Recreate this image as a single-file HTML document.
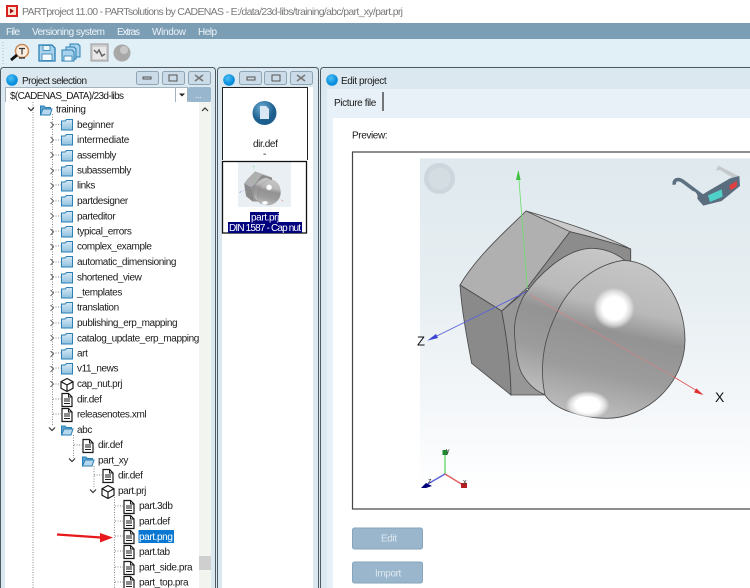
<!DOCTYPE html>
<html><head><meta charset="utf-8"><style>
html,body{margin:0;padding:0;background:#fff;width:750px;height:588px;overflow:hidden}
svg{display:block}
text{font-family:"Liberation Sans",sans-serif;font-size:10px;fill:#1a1a1a;letter-spacing:-.4px}
</style></head><body>
<svg xmlns="http://www.w3.org/2000/svg" width="750" height="588" viewBox="0 0 750 588">
<defs>
<linearGradient id="bg" x1="0" y1="0" x2="0" y2="1"><stop offset="0" stop-color="#dfe9ee"/><stop offset=".4" stop-color="#e7eef2"/><stop offset=".75" stop-color="#f4f7f9"/><stop offset="1" stop-color="#fff"/></linearGradient>
<linearGradient id="dome" x1=".6" y1="0" x2=".4" y2="1"><stop offset="0" stop-color="#c6c6c6"/><stop offset=".3" stop-color="#b9b9b9"/><stop offset=".46" stop-color="#939393"/><stop offset=".72" stop-color="#9c9c9c"/><stop offset="1" stop-color="#bdbdbd"/></linearGradient>
<radialGradient id="hl"><stop offset=".55" stop-color="#fff"/><stop offset=".8" stop-color="#fff" stop-opacity=".55"/><stop offset="1" stop-color="#fff" stop-opacity="0"/></radialGradient>
<linearGradient id="folder" x1="0" y1="0" x2="0" y2="1"><stop offset="0" stop-color="#d6e9f5"/><stop offset="1" stop-color="#8fc0df"/></linearGradient>
<radialGradient id="blue" cx=".4" cy=".35"><stop offset="0" stop-color="#4fc0f5"/><stop offset="1" stop-color="#0a8fdc"/></radialGradient>
<radialGradient id="ball" cx=".4" cy=".3"><stop offset="0" stop-color="#6fb0d8"/><stop offset="1" stop-color="#1c5f8e"/></radialGradient>
<symbol id="f" overflow="visible"><path d="M-5.500-4h3.500l1.500-1.500h6v10.500h-11z" fill="url(#folder)" stroke="#2a7fb5" stroke-width="1"/></symbol>
<symbol id="fo" overflow="visible"><path d="M-5.500 5v-9h3.500l1.500 1.500h5v1.500" fill="#5fa5d0" stroke="#2a7fb5"/><path d="M-5.500 5l2.500-6h9l-2 6z" fill="#b7d8ec" stroke="#2a7fb5"/></symbol>
<symbol id="d" overflow="visible"><path d="M-5-6.500h6.500l3.500 3.500v9.500h-10z" fill="#fff" stroke="#1a1a1a" stroke-width="1.200"/><path d="M1.500-6.500v3.500h3.500M-3-1h6M-3 1h6M-3 3.500h6" fill="none" stroke="#1a1a1a"/></symbol>
<symbol id="c" overflow="visible"><path d="M0-6.500l6 3.200v6.600l-6 3.200l-6-3.200v-6.600zM-6-3.300L0 0l6-3.300M0 0v6.500" fill="#fff" stroke="#1a1a1a" stroke-width="1.200"/></symbol>
<symbol id="r" overflow="visible"><path d="M-1.500-3L1.500 0L-1.500 3" fill="none" stroke="#666" stroke-width="1"/></symbol>
<symbol id="v" overflow="visible"><path d="M-3-1.500L0 1.500L3-1.500" fill="none" stroke="#333" stroke-width="1.200"/></symbol>
<symbol id="b" overflow="visible"><rect x=".5" y=".5" width="22" height="13" rx="2" fill="#cbdbe7" stroke="#8ea5b5"/></symbol>
<g id="nut">
<path d="M318 183C430 215 540 250 632 297V335L450 290Z" fill="#cacaca" stroke="#4a4a4a" stroke-width="2.500"/>
<path d="M450 245C520 262 580 278 632 297V340L400 430L320 415Z" fill="#8c8c8c" stroke="#4a4a4a" stroke-width="2.500"/>
<path d="M120 405C170 320 250 250 318 183L450 245L320 415L245 483Z" fill="#b0b0b0" stroke="#4a4a4a" stroke-width="2.500"/>
<path d="M120 405L245 483C262 570 272 660 273 735L155 640C140 560 125 480 120 405Z" fill="#8a8a8a" stroke="#4a4a4a" stroke-width="2.500"/>
<path d="M245 483L320 420L400 600L380 735H273C272 660 262 570 245 483Z" fill="#979797" stroke="#4a4a4a" stroke-width="2.500"/>
<path d="M510 295C430 300 350 380 310 440C285 490 280 530 285 570C288 620 295 650 305 670C325 705 350 725 380 737L620 335C590 310 550 293 510 295Z" fill="url(#dome)" stroke="#4a4a4a" stroke-width="2.500"/>
<path d="M610 331C720 335 795 450 795 570C795 700 680 805 560 805C480 805 400 775 375 735C355 640 375 560 410 490C445 410 520 345 610 331Z" fill="url(#dome)" stroke="#4a4a4a" stroke-width="2.500"/>
<ellipse cx="582" cy="475" rx="62" ry="62" fill="url(#hl)"/>
<ellipse cx="503" cy="765" rx="66" ry="42" fill="url(#hl)"/>
<path d="M295 65L322 415" stroke="#6fdc6f" stroke-width="2.500" fill="none"/>
<path d="M295 60l-7 30h14z" fill="#3fbf3f"/>
<path d="M320 425L30 568" stroke="#5a62d8" stroke-width="2.500" fill="none"/>
<path d="M22 572l26-20l6 12z" fill="#3a44d0"/>
<path d="M330 435L760 680" stroke="#d98080" stroke-width="2.500" fill="none" opacity=".75"/>
<path d="M760 680L845 731" stroke="#e05050" stroke-width="2.500" fill="none"/>
<path d="M850 735l-28-8l7-12z" fill="#e03030"/>
</g>
</defs>

<!-- chrome -->
<rect width="750" height="23" fill="#fff"/>
<rect x="6" y="5" width="12" height="12" fill="#d8201f"/><rect x="8" y="7" width="8" height="8" fill="#fbe3d5"/><path d="M10 8.500l4 2.500l-4 2.500z" fill="#a01010"/>
<text x="22" y="15" textLength="381" style="font-size:10.500px;fill:#7a7a7a;letter-spacing:0">PARTproject 11.00 - PARTsolutions by CADENAS - E:/data/23d-libs/training/abc/part_xy/part.prj</text>
<rect y="23" width="750" height="16" fill="#7b9eb5"/>
<text x="6" y="35" textLength="14" style="fill:#eef4f8;letter-spacing:0">File</text>
<text x="32" y="35" textLength="73" style="fill:#eef4f8;letter-spacing:0">Versioning system</text>
<text x="117" y="35" textLength="23" style="fill:#eef4f8;letter-spacing:0">Extras</text>
<text x="152" y="35" textLength="34" style="fill:#eef4f8;letter-spacing:0">Window</text>
<text x="198" y="35" textLength="19" style="fill:#eef4f8;letter-spacing:0">Help</text>
<rect y="39" width="750" height="549" fill="#dceaf2"/>
<rect y="39" width="750" height="27" fill="#e1eff6"/>
<path d="M3 42v22" stroke="#a9bcc8" stroke-dasharray="1 2"/>
<!-- toolbar icons -->
<circle cx="22" cy="51" r="6.500" fill="#fbeee0" stroke="#c98a55" stroke-width="1.500"/>
<path d="M19 48.500h6M22 48.500v6" stroke="#333" stroke-width="1.200"/>
<path d="M11 60l6-5" stroke="#111" stroke-width="2.800"/>
<path d="M19 58h6" stroke="#222" stroke-width="1.200"/>
<path d="M39 45h13l3 3v13h-16z" fill="#a9d3ec" stroke="#2a7fb5" stroke-width="1.300"/>
<rect x="43" y="45.500" width="7" height="5" fill="#eaf5fb" stroke="#2a7fb5" stroke-width=".8"/><rect x="42" y="54" width="10" height="6.500" fill="#f4fafd" stroke="#2a7fb5" stroke-width=".8"/>
<path d="M70 44h8l2 2v11h-10z" fill="#a9d3ec" stroke="#2a7fb5"/>
<path d="M66 47h8l2 2v10h-10z" fill="#a9d3ec" stroke="#2a7fb5"/>
<path d="M62 50h10l2 2v9h-12z" fill="#a9d3ec" stroke="#2a7fb5"/>
<rect x="64" y="56" width="8" height="5" fill="#f4fafd" stroke="#2a7fb5" stroke-width=".8"/>
<rect x="91" y="44" width="17" height="17" fill="#cfcfcf" stroke="#9a9a9a"/><rect x="93" y="47" width="13" height="12" fill="#e8e8e8"/><path d="M94 50l3 3l2-3l3 6l3-2" fill="none" stroke="#666" stroke-width="1.500"/>
<circle cx="122" cy="53" r="8.500" fill="#a8a8a8"/><circle cx="124" cy="50" r="4" fill="#c8c8c8"/>

<!-- panel 1 -->
<rect x=".5" y="67.500" width="215" height="530" rx="3" fill="#dbe8f0" stroke="#4c5a64"/>
<circle cx="12" cy="80" r="5.800" fill="url(#blue)"/>
<text x="22" y="84" textLength="65" style="letter-spacing:0">Project selection</text>
<use href="#b" x="136" y="71"/><use href="#b" x="162" y="71"/><use href="#b" x="188" y="71"/>
<path d="M143 79h8v-2h-8z" fill="none" stroke="#555"/><rect x="169" y="75" width="8" height="6" fill="none" stroke="#555"/><path d="M195 75l8 6m0-6l-8 6" stroke="#777" stroke-width="1.600"/>
<rect x="5.500" y="87.500" width="170" height="15" fill="#fff" stroke="#a3b3bd"/>
<rect x="175.500" y="87.500" width="12" height="15" fill="#fff" stroke="#a3b3bd"/>
<path d="M179 93.500h6l-3 3z" fill="#222"/>
<text x="10" y="99" textLength="114" style="letter-spacing:0">$(CADENAS_DATA)/23d-libs</text>
<rect x="188" y="87" width="23" height="15" rx="2" fill="#98b6cd"/>
<text x="195" y="98" style="font-size:9px;fill:#e8f0f5">...</text>
<rect x="5" y="102" width="194" height="486" fill="#fff"/>
<rect x="199" y="102" width="12" height="486" fill="#f2f4f0"/>
<path d="M202 111l3-3l3 3" fill="none" stroke="#333" stroke-width="1.200"/>
<rect x="199" y="556" width="12" height="14" fill="#cfcfcf"/>

<!-- tree lines -->
<g stroke="#8a8a8a" stroke-width="1" stroke-dasharray="1 1.500" fill="none">
<path d="M33 102V588M52.500 114V426M73.500 435V458M94 466V488M114.500 497V588"/>
<path d="M53 124.500h8M53 140h8M53 155h8M53 170h8M53 185h8M53 201h8M53 216h8M53 231h8M53 246h8M53 262h8M53 277h8M53 292h8M53 307h8M53 323h8M53 338h8M53 353h8M53 368h8M53 384h8M53 399h8M53 414h8"/>
<path d="M74 445h8M94 475h8M115 506h8M115 521h8M115 536h8M115 551h8M115 567h8M115 582h8"/>
</g>
<use href="#v" x="31" y="109"/><use href="#fo" x="46" y="110"/><text x="56" y="112.500">training</text>
<use href="#r" x="52" y="125"/><use href="#f" x="67" y="125"/><text x="77" y="128" style="letter-spacing:-.25px">beginner</text>
<use href="#r" x="52" y="140"/><use href="#f" x="67" y="140"/><text x="77" y="143" style="letter-spacing:-.25px">intermediate</text>
<use href="#r" x="52" y="155"/><use href="#f" x="67" y="156"/><text x="77" y="158.500">assembly</text>
<use href="#r" x="52" y="171"/><use href="#f" x="67" y="171"/><text x="77" y="173.500">subassembly</text>
<use href="#r" x="52" y="186"/><use href="#f" x="67" y="186"/><text x="77" y="188.500">links</text>
<use href="#r" x="52" y="201"/><use href="#f" x="67" y="201"/><text x="77" y="204">partdesigner</text>
<use href="#r" x="52" y="216"/><use href="#f" x="67" y="217"/><text x="77" y="219.500">parteditor</text>
<use href="#r" x="52" y="232"/><use href="#f" x="67" y="232"/><text x="77" y="234.500">typical_errors</text>
<use href="#r" x="52" y="247"/><use href="#f" x="67" y="247"/><text x="77" y="249.500">complex_example</text>
<use href="#r" x="52" y="262"/><use href="#f" x="67" y="262"/><text x="77" y="265">automatic_dimensioning</text>
<use href="#r" x="52" y="277"/><use href="#f" x="67" y="278"/><text x="77" y="280.500">shortened_view</text>
<use href="#r" x="52" y="293"/><use href="#f" x="67" y="293"/><text x="77" y="295.500">_templates</text>
<use href="#r" x="52" y="308"/><use href="#f" x="67" y="308"/><text x="77" y="310.500">translation</text>
<use href="#r" x="52" y="323"/><use href="#f" x="67" y="323"/><text x="77" y="326">publishing_erp_mapping</text>
<use href="#r" x="52" y="338"/><use href="#f" x="67" y="339"/><text x="77" y="341.500">catalog_update_erp_mapping</text>
<use href="#r" x="52" y="354"/><use href="#f" x="67" y="354"/><text x="77" y="356.500">art</text>
<use href="#r" x="52" y="369"/><use href="#f" x="67" y="369"/><text x="77" y="371.500">v11_news</text>
<use href="#r" x="52" y="384"/><use href="#c" x="67" y="385"/><text x="77" y="387">cap_nut.prj</text>
<use href="#d" x="67" y="400"/><text x="77" y="402.500">dir.def</text>
<use href="#d" x="67" y="415"/><text x="77" y="417.500">releasenotes.xml</text>
<use href="#v" x="52" y="429"/><use href="#fo" x="67" y="430"/><text x="77" y="433">abc</text>
<use href="#d" x="88" y="446"/><text x="98" y="448">dir.def</text>
<use href="#v" x="72" y="460"/><use href="#fo" x="88" y="461"/><text x="98" y="463.500">part_xy</text>
<use href="#d" x="108" y="476"/><text x="118" y="478.500">dir.def</text>
<use href="#v" x="93" y="491"/><use href="#c" x="108" y="492"/><text x="118" y="494">part.prj</text>
<use href="#d" x="129" y="507"/><text x="139" y="509">part.3db</text>
<use href="#d" x="129" y="522"/><text x="139" y="524.500">part.def</text>
<use href="#d" x="129" y="537"/><rect x="138.500" y="530" width="35.500" height="13" fill="#0a78d2"/><text x="139" y="540" style="fill:#fff">part.png</text>
<use href="#d" x="129" y="552"/><text x="139" y="555">part.tab</text>
<use href="#d" x="129" y="568"/><text x="139" y="570.500">part_side.pra</text>
<use href="#d" x="129" y="583"/><text x="139" y="585.500">part_top.pra</text>
<path d="M57 534.500L101 537.500" stroke="#e8191c" stroke-width="2.200" fill="none"/>
<path d="M113 537.500L100 533V542.500Z" fill="#e8191c"/>

<!-- panel 2 -->
<rect x="217.500" y="67.500" width="101" height="530" rx="3" fill="#dbe8f0" stroke="#4c5a64"/>
<circle cx="229" cy="80" r="5.800" fill="url(#blue)"/>
<use href="#b" x="239" y="71"/><use href="#b" x="264" y="71"/><use href="#b" x="290" y="71"/>
<rect x="247" y="77" width="8" height="3" fill="none" stroke="#555"/><rect x="272" y="75" width="8" height="6" fill="none" stroke="#555"/><path d="M297 75l8 6m0-6l-8 6" stroke="#777" stroke-width="1.600"/>
<rect x="222" y="87" width="91" height="501" fill="#fff"/>
<path d="M222.500 160V87.500H307.500V160" fill="none" stroke="#222"/>
<circle cx="264.500" cy="113" r="12" fill="url(#ball)"/>
<path d="M260 106h6l3 3v10h-9z" fill="#d9e8f2"/>
<text x="253" y="147">dir.def</text>
<text x="263" y="157">-</text>
<g transform="translate(238 162) scale(.0535)">
<rect width="990" height="840" fill="#e9eff3"/>
<use href="#nut"/>
</g>
<rect x="222.500" y="161.500" width="84" height="71.500" fill="none" stroke="#111" stroke-width="1.300"/>
<rect x="250" y="212" width="29" height="10" fill="#00007f"/>
<rect x="228" y="222" width="74" height="11" fill="#00007f"/>
<text x="251" y="220.500" style="fill:#fff">part.prj</text>
<text x="229" y="231" textLength="72" style="fill:#fff;letter-spacing:0">DIN 1587 - Cap nut</text>

<!-- panel 3 -->
<rect x="320.500" y="67.500" width="440" height="530" rx="3" fill="#dbe8f0" stroke="#4c5a64"/>
<circle cx="332" cy="80" r="5.800" fill="url(#blue)"/>
<text x="341" y="84">Edit project</text>
<rect x="327" y="89" width="423" height="499" fill="#e7f1f7"/>
<text x="334" y="106">Picture file</text>
<path d="M383 92v19" stroke="#333" stroke-width="1.300"/>
<rect x="333" y="118" width="417" height="470" fill="#fff"/>
<text x="352" y="138.500">Preview:</text>
<rect x="352.500" y="152" width="410" height="357" fill="#fff" stroke="#444" stroke-width="1.200"/>
<rect x="420" y="158.500" width="330" height="332" fill="url(#bg)"/>
<circle cx="439.500" cy="178.500" r="15.500" fill="#ccd6dc"/>
<circle cx="439.500" cy="178.500" r="11" fill="#d4dde2"/>
<g transform="translate(420 150) scale(.33333)">
<!-- glasses -->
<path d="M888 62L895 47L960 80L952 92L900 60Z" fill="#c5c9cc"/>
<path d="M763 104C760 88 775 84 790 95L850 140" fill="none" stroke="#5d7182" stroke-width="11"/>
<path d="M815 115L835 150L850 167L905 153L960 108L958 78L930 85L870 120L845 135Z" fill="#5a6d7e"/>
<ellipse cx="823" cy="135" rx="8" ry="13" transform="rotate(-35 823 135)" fill="#e6eaed"/>
<path d="M864 136L905 118L908 140L870 156Z" fill="#4fd0c8"/>
<path d="M928 106L951 92L950 110L931 121Z" fill="#e04040"/>
<use href="#nut"/>
</g>
<text x="417" y="345.500" style="font-size:13px;fill:#111;letter-spacing:0">Z</text>
<text x="715" y="402" style="font-size:14px;fill:#111;letter-spacing:0">X</text>
<!-- small triad -->
<path d="M445 474V453" stroke="#7ddc7d" stroke-width="1.600"/>
<path d="M445 474L426 485" stroke="#5a62d8" stroke-width="1.400"/>
<path d="M445 474L463 485" stroke="#e06060" stroke-width="1.400"/>
<rect x="442.500" y="450" width="5" height="5" fill="#1e8a2e"/>
<path d="M421 488l5-5l6 3l-6 2z" fill="#00007a"/>
<rect x="461" y="483" width="6" height="5" fill="#b02020"/>
<text x="446" y="453" style="font-size:7px;fill:#333">y</text>
<text x="463" y="484" style="font-size:7px;fill:#333">x</text>
<text x="428" y="483" style="font-size:7px;fill:#333">z</text>
<rect x="352.500" y="528" width="70" height="21" rx="2" fill="#9ab6cc" stroke="#86a4bb"/>
<text x="381" y="541.500" style="fill:#dce8f0">Edit</text>
<rect x="352.500" y="562" width="70" height="21" rx="2" fill="#9ab6cc" stroke="#86a4bb"/>
<text x="375" y="576.500" style="fill:#dce8f0">Import</text>
</svg>
</body></html>
